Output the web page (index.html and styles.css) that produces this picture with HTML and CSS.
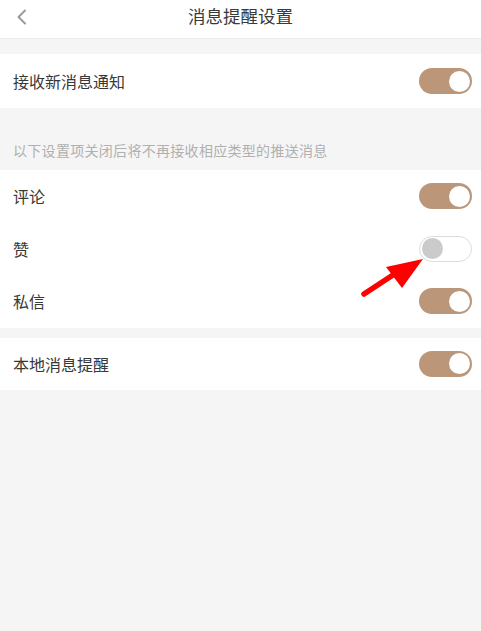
FILE: index.html
```html
<!DOCTYPE html>
<html lang="zh-CN">
<head>
<meta charset="utf-8">
<title>消息提醒设置</title>
<link rel="stylesheet" href="styles.css">
</head>
<body>
<div class="page">
  <header class="topbar">
    <span class="back">
      <svg width="12" height="16" viewBox="0 0 12 16"><path d="M9 1.5 L2.5 8 L9 14.5" fill="none" stroke="#9a9a9a" stroke-width="2" stroke-linecap="round" stroke-linejoin="round"/></svg>
    </span>
    <h1 class="title">消息提醒设置</h1>
  </header>

  <section class="group first">
    <div class="row tall"><span class="label">接收新消息通知</span><span class="switch on"><i></i></span></div>
  </section>

  <p class="caption">以下设置项关闭后将不再接收相应类型的推送消息</p>

  <section class="group">
    <div class="row"><span class="label">评论</span><span class="switch on"><i></i></span></div>
    <div class="row"><span class="label">赞</span><span class="switch off"><i></i></span></div>
    <div class="row"><span class="label">私信</span><span class="switch on"><i></i></span></div>
  </section>

  <section class="group third">
    <div class="row short"><span class="label">本地消息提醒</span><span class="switch on"><i></i></span></div>
  </section>

  <svg class="arrow" width="481" height="631" viewBox="0 0 481 631">
    <line x1="364" y1="294" x2="396" y2="273" stroke="#ff0000" stroke-width="5.5" stroke-linecap="round"/>
    <polygon points="423,259 386,267 402,288" fill="#ff0000"/>
  </svg>
</div>
</body>
</html>
```

FILE: styles.css
```css
* { box-sizing: border-box; }
html, body { margin: 0; padding: 0; }
body {
  background: #f5f5f5;
  font-family: "Noto Sans CJK SC", "Noto Sans", sans-serif;
  color: #333;
}
.page {
  position: relative;
  width: 481px;
  min-height: 631px;
  background: #f5f5f5;
}
.topbar {
  height: 39px;
  background: #fff;
  border-bottom: 1px solid #ececec;
  display: flex;
  align-items: center;
  justify-content: center;
  position: relative;
}
.back {
  position: absolute;
  left: 16px;
  top: 9px;
  display: flex;
}
.title {
  margin: 0;
  font-size: 17.5px;
  font-weight: 400;
  color: #3a3a3a;
  line-height: 20px;
  margin-top: -6px;
}
.group {
  background: #fff;
}
.group.first { margin-top: 15px; }
.group.third { margin-top: 10px; }
.row {
  height: 52.5px;
  display: flex;
  align-items: center;
  justify-content: space-between;
  padding: 0 9px 0 13px;
}
.row.tall { height: 54px; }
.row.short { height: 52px; }
.label {
  font-size: 16px;
  line-height: 20px;
  color: #383838;
}
.caption {
  margin: 0;
  padding: 32px 13px 10px;
  font-size: 14px;
  line-height: 20px;
  color: #b0b0b0;
  letter-spacing: 0.3px;
}
.switch {
  width: 53px;
  height: 26px;
  border-radius: 13px;
  position: relative;
  display: block;
}
.switch i {
  position: absolute;
  top: 2.5px;
  width: 21px;
  height: 21px;
  border-radius: 50%;
}
.switch.on { background: #bb9678; }
.switch.on i { right: 2.5px; background: #fff; }
.switch.off { background: #fff; border: 1px solid #dcdcdc; }
.switch.off i { left: 2px; top: 1.5px; background: #cbcbcb; }
.arrow {
  position: absolute;
  left: 0;
  top: 0;
  pointer-events: none;
}
```
